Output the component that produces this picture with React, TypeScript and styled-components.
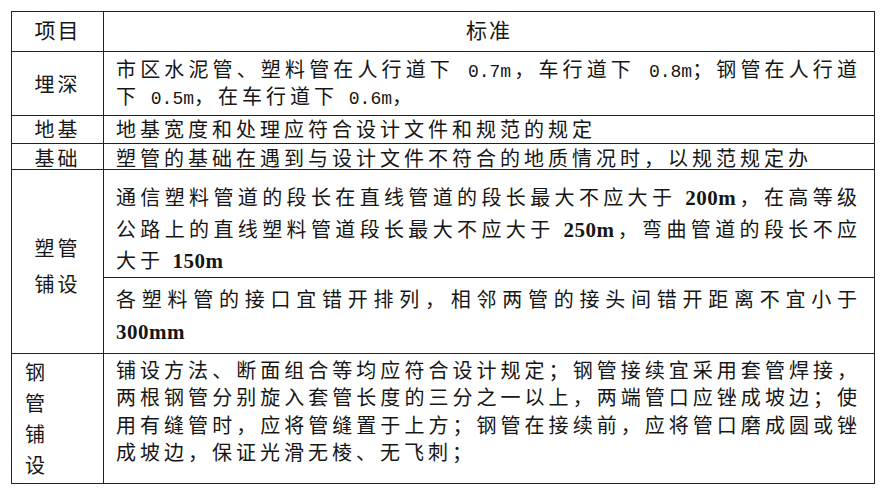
import styled, { createGlobalStyle } from "styled-components";

const GlobalStyle = createGlobalStyle`
  html, body {
    margin: 0;
    padding: 0;
    background: #ffffff;
  }
  body {
    font-family: "Noto Sans CJK SC", "Liberation Serif", serif;
    color: #161616;
  }
`;

const Page = styled.div`
  padding: 11px 0 0 11px;
`;

const Table = styled.table`
  width: 863px;
  border-collapse: collapse;
  table-layout: fixed;
  border: 1px solid #222;
`;

// $shift nudges the text of a tight row up (negative) or down (positive)
const Row = styled.tr<{ $h: number; $shift?: number }>`
  height: ${(p) => p.$h}px;

  & > td {
    ${(p) => (p.$shift && p.$shift < 0 ? `padding-bottom: ${-p.$shift}px;` : "")}
    ${(p) => (p.$shift && p.$shift > 0 ? `padding-top: ${p.$shift}px;` : "")}
  }
`;

const Label = styled.td<{ $lh?: number; $left?: boolean; $top?: number }>`
  border: 1px solid #222;
  padding: ${(p) => (p.$top ? `${p.$top}px 0 0 ${p.$left ? 13 : 0}px` : `0 0 0 ${p.$left ? 13 : 0}px`)};
  vertical-align: ${(p) => (p.$top ? "top" : "middle")};
  text-align: ${(p) => (p.$left ? "left" : "center")};
  font-size: 20px;
  letter-spacing: 3px;
  line-height: ${(p) => p.$lh ?? 22}px;
`;

const Cell = styled.td<{ $lh?: number; $top?: number }>`
  border: 1px solid #222;
  padding: ${(p) => (p.$top ? `${p.$top}px 16px 0 12px` : "0 16px 0 12px")};
  vertical-align: ${(p) => (p.$top ? "top" : "middle")};
  font-size: 20px;
  letter-spacing: 4px;
  line-height: ${(p) => p.$lh ?? 22}px;
`;

const HeadCell = styled.th`
  border: 1px solid #222;
  padding: 0 0 6px 0;
  font-size: 21px;
  font-weight: 400;
  letter-spacing: 2px;
  line-height: 24px;
  text-align: center;
  vertical-align: middle;
`;

const Line = styled.div<{ $full?: boolean }>`
  text-align: ${(p) => (p.$full ? "justify" : "left")};
  text-align-last: ${(p) => (p.$full ? "justify" : "auto")};
  letter-spacing: ${(p) => (p.$full ? "1px" : "inherit")};
`;

const Mono = styled.span`
  font-family: "Liberation Mono", monospace;
  font-size: 18px;
  letter-spacing: 0;
`;

const Num = styled.span`
  font-family: "Liberation Serif", serif;
  font-weight: 700;
  font-size: 21px;
  letter-spacing: 0.5px;
`;

export default function App() {
  return (
    <Page>
      <GlobalStyle />
      <Table>
        <colgroup>
          <col style={{ width: 92 }} />
          <col style={{ width: 771 }} />
        </colgroup>
        <tbody>
          <Row $h={40}>
            <HeadCell>项目</HeadCell>
            <HeadCell>标准</HeadCell>
          </Row>
          <Row $h={64}>
            <Label>埋深</Label>
            <Cell $lh={24}>
              <Line $full>
                市区水泥管、塑料管在人行道下<Mono> 0.7m</Mono>，车行道下<Mono> 0.8m</Mono>；钢管在人行道
              </Line>
              <Line>
                下<Mono> 0.5m</Mono>，在车行道下<Mono> 0.6m</Mono>，
              </Line>
            </Cell>
          </Row>
          <Row $h={28} $shift={-2}>
            <Label>地基</Label>
            <Cell>
              <Line>地基宽度和处理应符合设计文件和规范的规定</Line>
            </Cell>
          </Row>
          <Row $h={26} $shift={2}>
            <Label>基础</Label>
            <Cell>
              <Line>塑管的基础在遇到与设计文件不符合的地质情况时，以规范规定办</Line>
            </Cell>
          </Row>
          <Row $h={104}>
            <Label rowSpan={2} $lh={36} $top={60}>
              塑管
              <br />
              铺设
            </Label>
            <Cell $lh={30.5} $top={12}>
              <Line $full>
                通信塑料管道的段长在直线管道的段长最大不应大于 <Num>200m</Num>，在高等级
              </Line>
              <Line $full>
                公路上的直线塑料管道段长最大不应大于 <Num>250m</Num>，弯曲管道的段长不应
              </Line>
              <Line>
                大于 <Num>150m</Num>
              </Line>
            </Cell>
          </Row>
          <Row $h={76}>
            <Cell $lh={32}>
              <Line $full>各塑料管的接口宜错开排列，相邻两管的接头间错开距离不宜小于</Line>
              <Line>
                <Num>300mm</Num>
              </Line>
            </Cell>
          </Row>
          <Row $h={130}>
            <Label $left $lh={31} $top={2}>
              钢
              <br />
              管
              <br />
              铺
              <br />
              设
            </Label>
            <Cell $lh={27.5} $top={2}>
              <Line $full>铺设方法、断面组合等均应符合设计规定；钢管接续宜采用套管焊接，</Line>
              <Line $full>两根钢管分别旋入套管长度的三分之一以上，两端管口应锉成坡边；使</Line>
              <Line $full>用有缝管时，应将管缝置于上方；钢管在接续前，应将管口磨成圆或锉</Line>
              <Line>成坡边，保证光滑无棱、无飞刺；</Line>
            </Cell>
          </Row>
        </tbody>
      </Table>
    </Page>
  );
}
